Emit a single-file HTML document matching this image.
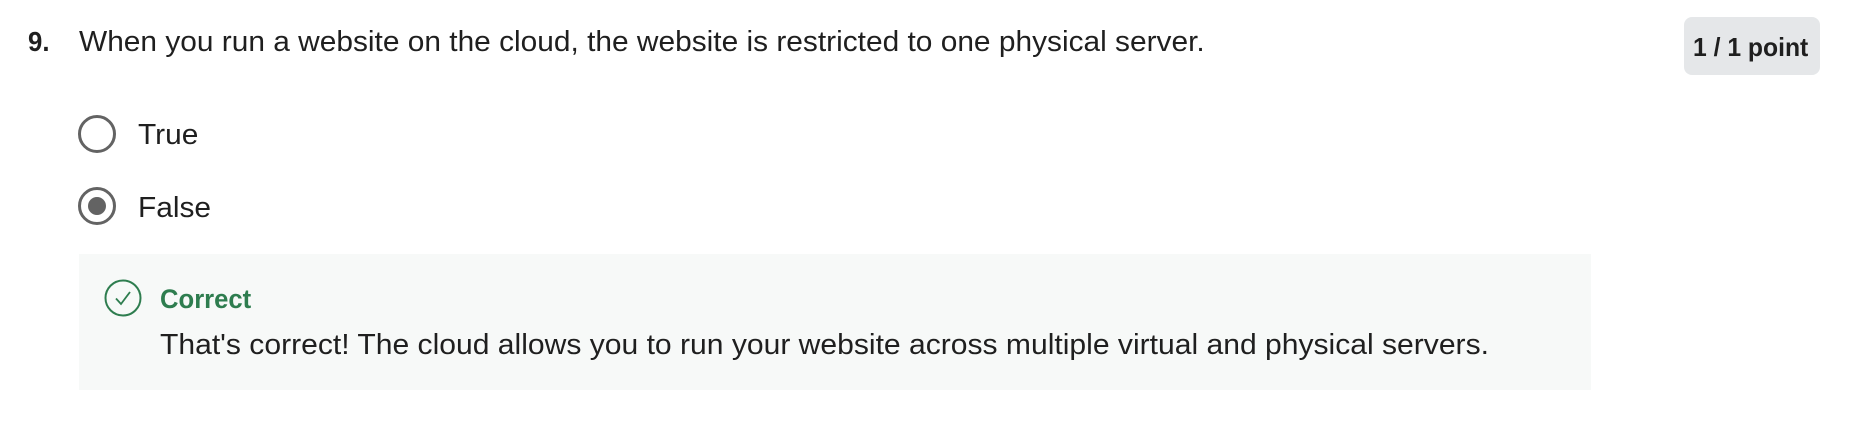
<!DOCTYPE html>
<html><head><style>
body{margin:0;width:1866px;height:446px;background:#fff;font-family:"Liberation Sans",sans-serif;color:#1f1f1f;position:relative;overflow:hidden}
.a{position:absolute;white-space:nowrap;transform-origin:0 50%}
</style></head><body>
<div class="a" style="left:28px;top:24px;font-size:28px;font-weight:bold;line-height:36px;transform:scaleX(.92)">9.</div>
<div class="a" style="left:79px;top:24px;font-size:29px;line-height:36px;transform:scaleX(1.03)">When you run a website on the cloud, the website is restricted to one physical server.</div>
<div style="position:absolute;left:1684px;top:17px;width:136px;height:58px;background:#e5e7e9;border-radius:8px"></div>
<div class="a" style="left:1693px;top:30px;font-size:26px;font-weight:bold;line-height:34px;transform:scaleX(.95)">1 / 1 point</div>
<div style="position:absolute;left:78px;top:115px;width:38px;height:38px;border:3.5px solid #636363;border-radius:50%;box-sizing:border-box;"></div>
<div class="a" style="left:138px;top:117px;font-size:29px;line-height:36px;transform:scaleX(1.03)">True</div>
<div style="position:absolute;left:78px;top:187px;width:38px;height:38px;border:3.5px solid #636363;border-radius:50%;box-sizing:border-box;"></div>
<div style="position:absolute;left:88px;top:197px;width:18px;height:18px;background:#636363;border-radius:50%"></div>
<div class="a" style="left:138px;top:190px;font-size:29px;line-height:36px;transform:scaleX(1.03)">False</div>
<div style="position:absolute;left:79px;top:254px;width:1512px;height:136px;background:#f7f9f8"></div>
<svg style="position:absolute;left:104px;top:279px" width="38" height="38" viewBox="0 0 38 38"><circle cx="19" cy="19" r="17.5" fill="none" stroke="#2e7d4f" stroke-width="2"/><path d="M12 19.5l5 5.5 9-12" fill="none" stroke="#2e7d4f" stroke-width="1.8"/></svg>
<div class="a" style="left:160px;top:282px;font-size:27px;font-weight:bold;color:#2e7d4f;line-height:34px;transform:scaleX(.95)">Correct</div>
<div class="a" style="left:160px;top:327px;font-size:29px;line-height:36px;transform:scaleX(1.037)">That's correct! The cloud allows you to run your website across multiple virtual and physical servers.</div>
</body></html>
